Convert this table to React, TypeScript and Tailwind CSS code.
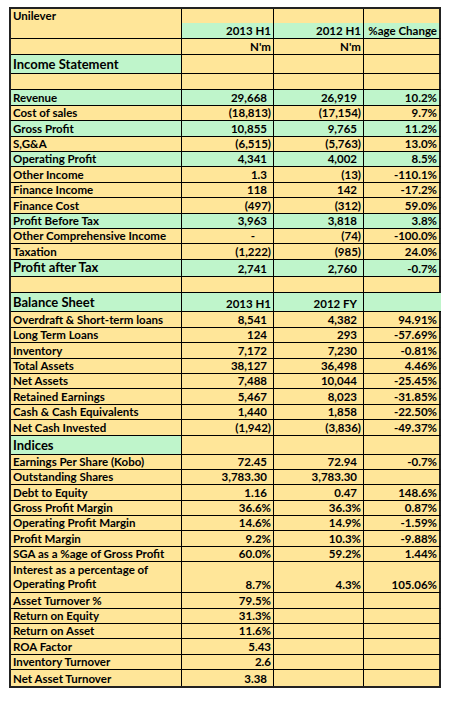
import React from "react";

const Y = "bg-[#FFE699]";
const G = "bg-[#BFF5CB]";

type Cell = string | { t: string; pr: string };
type Row = {
  c: [string, Cell, Cell, Cell];
  bg: [string, string, string, string];
  h: string;
  big?: boolean;
  noRight?: boolean;
  two?: boolean;
};

const allY: [string, string, string, string] = [Y, Y, Y, Y];
const allG: [string, string, string, string] = [G, G, G, G];
const H = "h-[15.4px]";

const p2 = (t: string) => ({ t, pr: "pr-[2px]" });
const p6 = (t: string) => ({ t, pr: "pr-[6px]" });

const rows: Row[] = [
  { c: ["Unilever", "", "", ""], bg: allY, h: "h-[14.4px]" },
  { c: ["", p2("2013 H1"), p2("2012 H1"), "%age Change"], bg: [Y, G, G, G], h: "h-[16px]" },
  { c: ["", p2("N'm"), p2("N'm"), ""], bg: allY, h: "h-[16px]" },
  { c: ["Income Statement", "", "", ""], bg: [G, Y, Y, Y], h: "h-[19px]", big: true },
  { c: ["", "", "", ""], bg: allY, h: "h-[16px]" },
  { c: ["Revenue", "29,668", "26,919", "10.2%"], bg: allG, h: H },
  { c: ["Cost of sales", "(18,813)", "(17,154)", "9.7%"], bg: allY, h: H },
  { c: ["Gross Profit", "10,855", "9,765", "11.2%"], bg: allG, h: H },
  { c: ["S,G&A", "(6,515)", "(5,763)", "13.0%"], bg: allY, h: H },
  { c: ["Operating Profit", "4,341", "4,002", "8.5%"], bg: allG, h: H },
  { c: ["Other Income", "1.3", "(13)", "-110.1%"], bg: allY, h: H },
  { c: ["Finance Income", "118", "142", "-17.2%"], bg: allY, h: H },
  { c: ["Finance Cost", "(497)", "(312)", "59.0%"], bg: allY, h: H },
  { c: ["Profit Before Tax", "3,963", "3,818", "3.8%"], bg: allG, h: H },
  { c: ["Other Comprehensive Income", { t: "-", pr: "pr-[18px]" }, "(74)", "-100.0%"], bg: allY, h: H },
  { c: ["Taxation", "(1,222)", "(985)", "24.0%"], bg: allY, h: H },
  { c: ["Profit after Tax", "2,741", "2,760", "-0.7%"], bg: allG, h: "h-[17.7px]", big: true },
  { c: ["", "", "", ""], bg: allY, h: "h-[16px]" },
  { c: ["Balance Sheet", p2("2013 H1"), p6("2012 FY"), ""], bg: allG, h: "h-[19px]", big: true, noRight: true },
  { c: ["Overdraft & Short-term loans", "8,541", "4,382", "94.91%"], bg: allY, h: H },
  { c: ["Long Term Loans", "124", "293", "-57.69%"], bg: allY, h: H },
  { c: ["Inventory", "7,172", "7,230", "-0.81%"], bg: allY, h: H },
  { c: ["Total Assets", "38,127", "36,498", "4.46%"], bg: allY, h: H },
  { c: ["Net Assets", "7,488", "10,044", "-25.45%"], bg: allY, h: H },
  { c: ["Retained Earnings", "5,467", "8,023", "-31.85%"], bg: allY, h: H },
  { c: ["Cash & Cash Equivalents", "1,440", "1,858", "-22.50%"], bg: allY, h: H },
  { c: ["Net Cash Invested", "(1,942)", "(3,836)", "-49.37%"], bg: allY, h: H },
  { c: ["Indices", "", "", ""], bg: [G, Y, Y, Y], h: "h-[19px]", big: true },
  { c: ["Earnings Per Share (Kobo)", "72.45", "72.94", "-0.7%"], bg: allY, h: H },
  { c: ["Outstanding Shares", "3,783.30", "3,783.30", ""], bg: allY, h: H },
  { c: ["Debt to Equity", "1.16", "0.47", "148.6%"], bg: allY, h: H },
  { c: ["Gross Profit Margin", "36.6%", "36.3%", "0.87%"], bg: allY, h: H },
  { c: ["Operating Profit Margin", "14.6%", "14.9%", "-1.59%"], bg: allY, h: H },
  { c: ["Profit Margin", "9.2%", "10.3%", "-9.88%"], bg: allY, h: H },
  { c: ["SGA as a %age of Gross Profit", "60.0%", "59.2%", "1.44%"], bg: allY, h: H },
  { c: ["Interest as a percentage of", "8.7%", "4.3%", "105.06%"], bg: allY, h: "h-[31px]", two: true },
  { c: ["Asset Turnover %", "79.5%", "", ""], bg: allY, h: H },
  { c: ["Return on Equity", "31.3%", "", ""], bg: allY, h: H },
  { c: ["Return on Asset", "11.6%", "", ""], bg: allY, h: H },
  { c: ["ROA Factor", p2("5.43"), "", ""], bg: allY, h: H },
  { c: ["Inventory Turnover", p2("2.6"), "", ""], bg: allY, h: H },
  { c: ["Net Asset Turnover", "3.38", "", ""], bg: allY, h: H },
];

function autoPad(t: string): string {
  if (t.endsWith(")") || t.endsWith("%")) return "pr-[2px]";
  return "pr-[6px]";
}

function cellInfo(c: Cell): { t: string; pr: string } {
  if (typeof c === "string") return { t: c, pr: autoPad(c) };
  return c;
}

export default function App() {
  return (
    <div
      className="pl-[9px] pt-[7px] bg-white min-h-[705px] text-black"
      style={{ fontFamily: "Lato, 'Liberation Sans', sans-serif" }}
    >
      <div className="w-[432px] border-l-2 border-t-2 border-b-2 border-[#222]">
        {rows.map((r, i) => {
          const last = i === rows.length - 1;
          const bb = last ? "" : "border-b border-black";
          const c2 = cellInfo(r.c[1]);
          const c3 = cellInfo(r.c[2]);
          const c4 = cellInfo(r.c[3]);
          return (
            <div key={i} className={`grid grid-cols-[171px_92px_90px_77px] ${r.h}`}>
              <div
                className={`${r.bg[0]} ${bb} border-r border-black flex items-end pl-[2px] pb-[1px] font-bold whitespace-nowrap ${
                  r.big ? "text-[13px] leading-[15px]" : "text-[11.5px] leading-[13px]"
                }`}
              >
                {r.two ? (
                  <div className="flex flex-col">
                    <span className="leading-[15px]">Interest as a percentage of</span>
                    <span className="leading-[14px]">Operating Profit</span>
                  </div>
                ) : (
                  r.c[0]
                )}
              </div>
              <div
                className={`${r.bg[1]} ${bb} border-r border-black flex items-end justify-end ${c2.pr} pb-[1px] font-bold text-[11.5px] leading-[13px] whitespace-nowrap`}
              >
                {c2.t}
              </div>
              <div
                className={`${r.bg[2]} ${bb} border-r border-black flex items-end justify-end ${c3.pr} pb-[1px] font-bold text-[11.5px] leading-[13px] whitespace-nowrap`}
              >
                {c3.t}
              </div>
              <div
                className={`${r.bg[3]} ${bb} ${
                  r.noRight ? "" : "border-r-2 border-r-[#222]"
                } flex items-end justify-end pr-[2px] pb-[1px] font-bold text-[11.5px] leading-[13px] whitespace-nowrap`}
              >
                {c4.t}
              </div>
            </div>
          );
        })}
      </div>
    </div>
  );
}
